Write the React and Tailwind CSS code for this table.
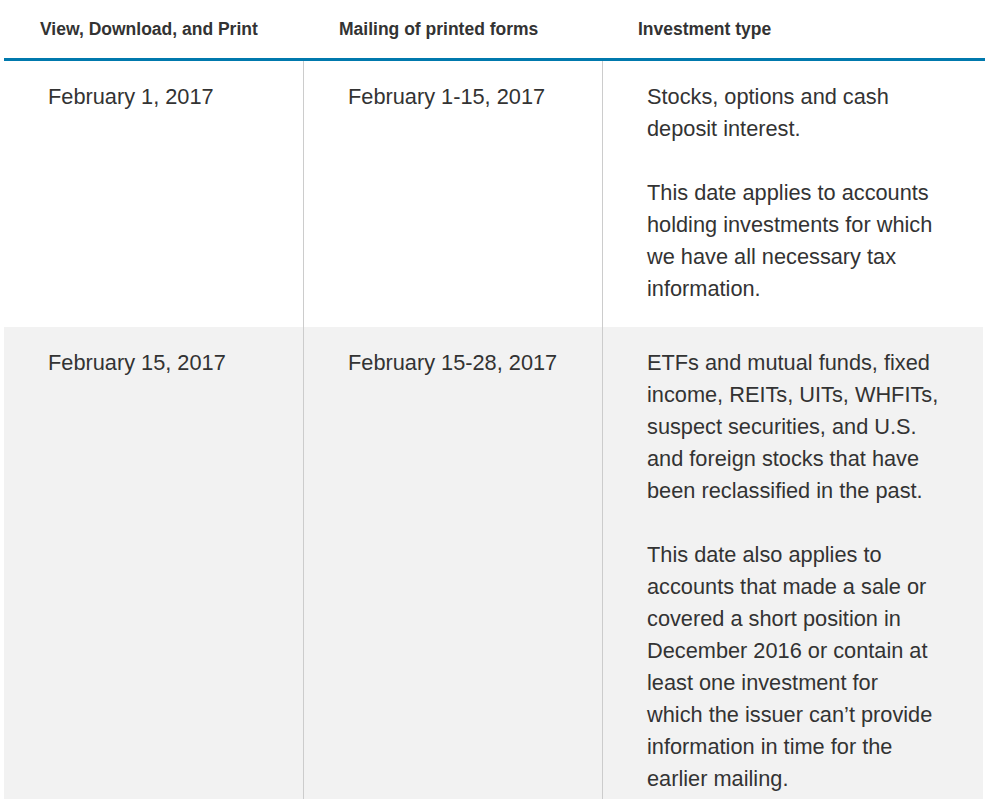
const rows = [
  {
    view: 'February 1, 2017',
    mailing: 'February 1-15, 2017',
    type: [
      'Stocks, options and cash deposit interest.',
      'This date applies to accounts holding investments for which we have all necessary tax information.',
    ],
    shaded: false,
  },
  {
    view: 'February 15, 2017',
    mailing: 'February 15-28, 2017',
    type: [
      'ETFs and mutual funds, fixed income, REITs, UITs, WHFITs, suspect securities, and U.S. and foreign stocks that have been reclassified in the past.',
      'This date also applies to accounts that made a sale or covered a short position in December 2016 or contain at least one investment for\nwhich the issuer can\u2019t provide information in time for the earlier mailing.',
    ],
    shaded: true,
  },
];

export default function App() {
  return (
    <div className="min-h-screen bg-white overflow-hidden" style={{ fontFamily: '"Liberation Sans", Arial, sans-serif' }}>
      <div className="ml-[4px] w-[981px] text-[#333333]">
        {/* Header */}
        <div className="grid grid-cols-[299px_299px_1fr] h-[61px] border-b-[3px] border-[#0079ad]">
          <div className="pl-[36px] flex items-center text-[17.5px] font-bold">View, Download, and Print</div>
          <div className="pl-[36px] flex items-center text-[17.5px] font-bold">Mailing of printed forms</div>
          <div className="pl-[36px] flex items-center text-[17.5px] font-bold">Investment type</div>
        </div>

        {/* Body */}
        {rows.map((row, i) => (
          <div
            key={i}
            className={`grid grid-cols-[299px_299px_1fr] text-[21.75px] leading-[32px] ${row.shaded ? 'bg-[#f2f2f2] w-[979px]' : ''}`}
          >
            <div className="pl-[44px] pr-[20px] pt-[20px] pb-[22px]">{row.view}</div>
            <div className="border-l border-[#cccccc] pl-[44px] pr-[20px] pt-[20px] pb-[22px]">{row.mailing}</div>
            <div className="border-l border-[#cccccc] pl-[44px] pr-[40px] pt-[20px] pb-[22px] space-y-[32px]">
              {row.type.map((p, j) => (
                <p key={j} className="whitespace-pre-line">{p}</p>
              ))}
            </div>
          </div>
        ))}
      </div>
    </div>
  );
}
